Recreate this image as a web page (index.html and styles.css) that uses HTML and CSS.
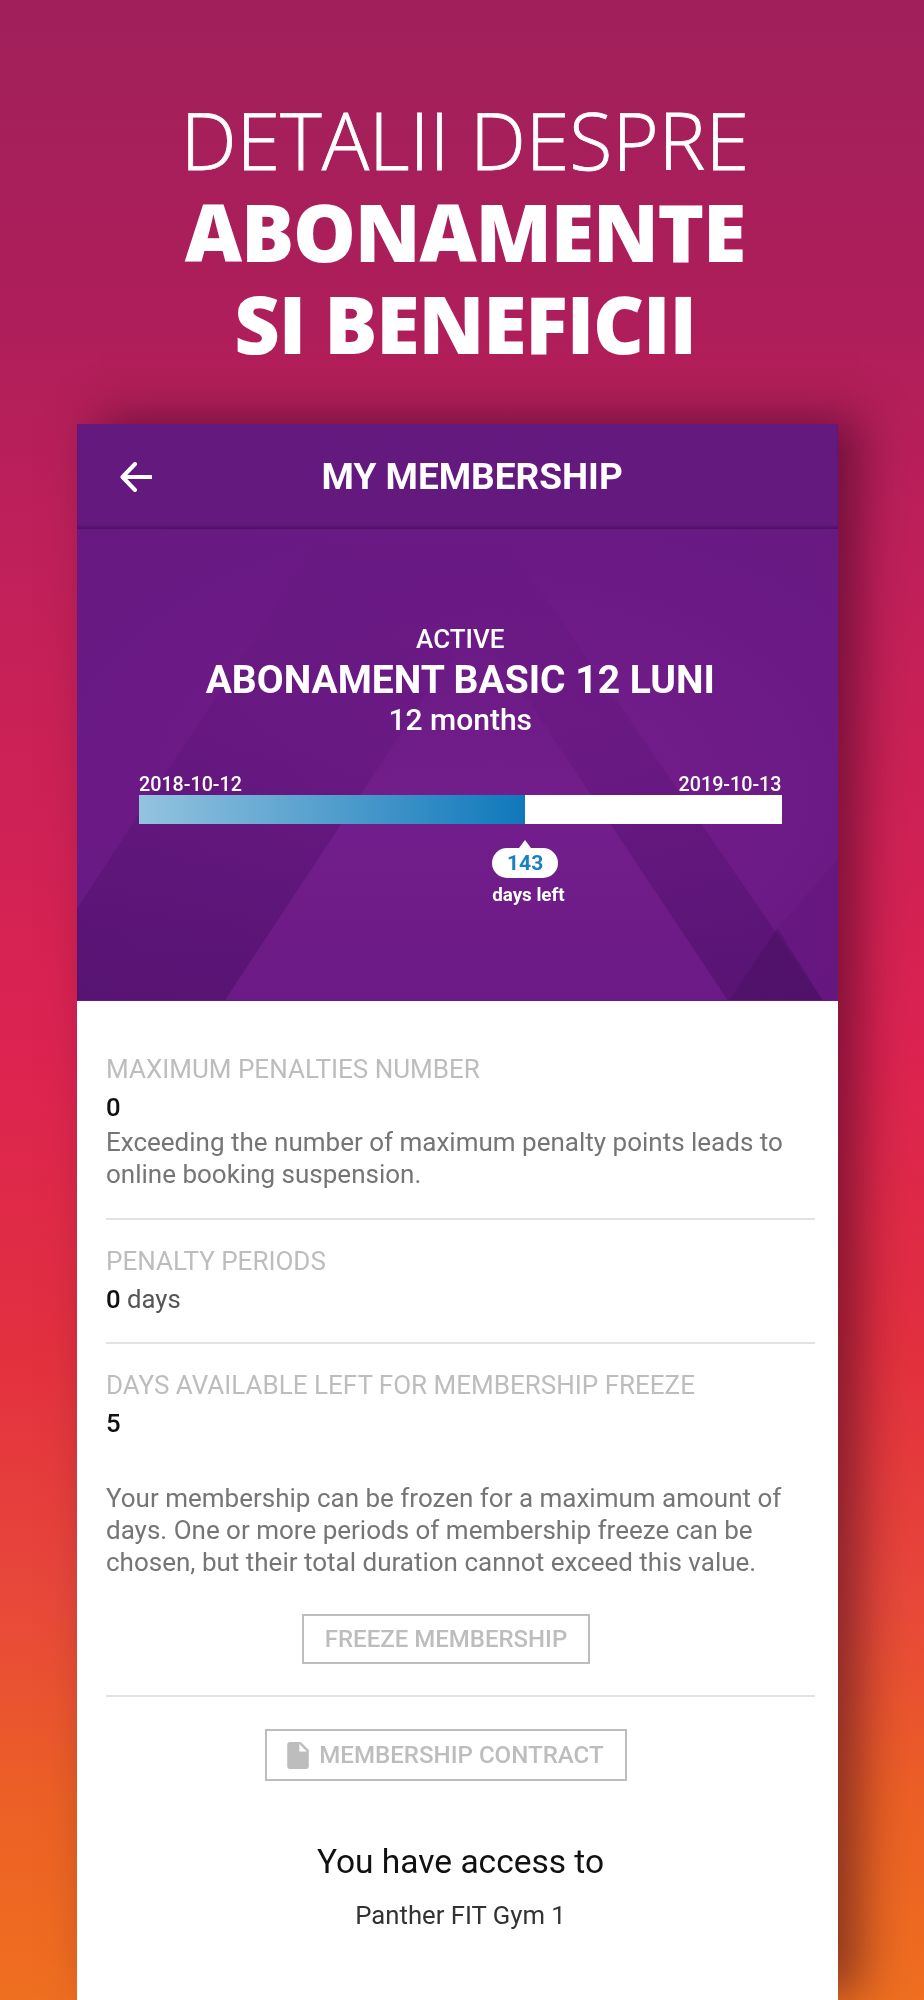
FILE: index.html
```html
<!DOCTYPE html>
<html lang="en">
<head>
<meta charset="utf-8">
<title>My Membership</title>
<link rel="stylesheet" href="styles.css">
</head>
<body>
<h1 class="headline">
  <span class="headline-light">DETALII DESPRE</span>
  <span class="headline-bold">ABONAMENTE</span>
  <span class="headline-bold">SI BENEFICII</span>
</h1>
<main class="card">
  <header class="topbar">
    <svg class="back" viewBox="0 0 32 30" aria-hidden="true"><path d="M31 15H3M15 2 2.5 15 15 28" /></svg>
    <div class="topbar-title">MY MEMBERSHIP</div>
  </header>
  <section class="hero">
    <svg class="hero-art" viewBox="0 0 761 473" preserveAspectRatio="none" aria-hidden="true">
      <defs>
        <linearGradient id="band" x1="0" y1="0" x2="0" y2="1">
          <stop offset="0.2" stop-color="#4a0f66" stop-opacity="0"/>
          <stop offset="0.55" stop-color="#4a0f66" stop-opacity="0.18"/>
          <stop offset="1" stop-color="#4a0f66" stop-opacity="0.55"/>
        </linearGradient>
        <linearGradient id="inner" x1="0" y1="0" x2="0" y2="1">
          <stop offset="0" stop-color="#721e8c" stop-opacity="0"/>
          <stop offset="0.5" stop-color="#721e8c"/>
          <stop offset="1" stop-color="#6c1a86"/>
        </linearGradient>
      </defs>
      <polygon points="333,-129 -60,472 745,472" fill="url(#band)"/>
      <polygon points="398,92 148,472 650,472" fill="url(#inner)"/>
      <polygon points="700,400 652,472 745,472" fill="#4b1066" opacity="0.6"/>
      <polygon points="761,330 700,400 745,472 761,472" fill="#4b1066" opacity="0.12"/>
    </svg>
    <div class="hero-content">
      <div class="status">ACTIVE</div>
      <div class="plan">ABONAMENT BASIC 12 LUNI</div>
      <div class="duration">12 months</div>
      <div class="dates"><span>2018-10-12</span><span>2019-10-13</span></div>
      <div class="bar"><div class="bar-fill" style="width:60.1%"></div></div>
      <div class="marker" style="margin-left:calc(60.1% - 33px)">
        <div class="bubble">143</div>
        <div class="marker-label">days left</div>
      </div>
    </div>
  </section>
  <section class="details">
    <div class="block block-first">
      <div class="label">MAXIMUM PENALTIES NUMBER</div>
      <div class="value">0</div>
      <p class="desc">Exceeding the number of maximum penalty points leads to online booking suspension.</p>
    </div>
    <div class="block block-mid">
      <div class="label">PENALTY PERIODS</div>
      <div class="value">0 <span class="value-unit">days</span></div>
    </div>
    <div class="block block-freeze">
      <div class="label">DAYS AVAILABLE LEFT FOR MEMBERSHIP FREEZE</div>
      <div class="value">5</div>
      <p class="desc desc-freeze">Your membership can be frozen for a maximum amount of days. One or more periods of membership freeze can be chosen, but their total duration cannot exceed this value.</p>
      <div class="btn-row"><div class="btn">FREEZE MEMBERSHIP</div></div>
    </div>
    <div class="btn-row btn-row-contract">
      <div class="btn btn-icon">
        <svg class="doc" viewBox="4 2 16 20" aria-hidden="true"><path d="M6 2c-1.1 0-2 .9-2 2v16c0 1.1.9 2 2 2h12c1.1 0 2-.9 2-2V8l-6-6H6zm7 7V3.5L18.5 9H13z"/></svg>
        MEMBERSHIP CONTRACT
      </div>
    </div>
    <h2 class="access-title">You have access to</h2>
    <div class="access-item">Panther FIT Gym 1</div>
  </section>
</main>
</body>
</html>
```

FILE: styles.css
```css
html, body { margin: 0; padding: 0; }
body {
  width: 924px;
  height: 2000px;
  overflow: hidden;
  background: linear-gradient(180deg, #a0205b 0, #ad1e5a 300px, #c0205a 560px, #dc2351 1050px, #e3303f 1350px, #e8483a 1600px, #ec6025 1800px, #ef6f20 2000px);
  font-family: Roboto, "Liberation Sans", sans-serif;
}
.headline {
  margin: 0;
  padding: 94px 0 0 6px;
  height: 424px;
  box-sizing: border-box;
  text-align: center;
  color: #fff;
  font-family: "Open Sans", sans-serif;
  font-size: 79px;
  line-height: 92px;
  font-weight: 400;
}
.headline span { display: block; }
.headline-light { font-weight: 300; -webkit-text-stroke: 0.8px #fff; }
.headline-bold { font-weight: 800; letter-spacing: -1.2px; }

.card {
  margin-left: 76.5px;
  width: 761.5px;
  height: 1576px;
  background: #fff;
  box-shadow: 22px -6px 44px rgba(40, 0, 30, 0.5);
}
.topbar {
  display: flex;
  align-items: center;
  gap: 170px;
  height: 105px;
  box-sizing: border-box;
  padding: 0 0 0 43px;
  background: #64197f;
  box-shadow: inset 0 -3px 3px -1px rgba(60, 10, 80, 0.6);
}
.back { width: 32px; height: 30px; flex: none; }
.back path { fill: none; stroke: #fff; stroke-width: 4; stroke-linecap: round; stroke-linejoin: round; }
.topbar-title {
  color: #fff;
  font-size: 37px;
  font-weight: 700;
  white-space: nowrap;
  filter: blur(0.5px);
}
.hero {
  position: relative;
  height: 472px;
  background: radial-gradient(ellipse at 55% 55%, #751d8d 0, #6b1a85 60%, #671981 100%);
  overflow: hidden;
}
.hero-art { position: absolute; inset: 0; width: 100%; height: 100%; }
.hero-content {
  position: relative;
  box-sizing: border-box;
  height: 100%;
  padding: 95px 56.5px 0 62.5px;
  color: #fff;
  text-align: center;
  filter: blur(0.5px);
}
.status { font-size: 26px; line-height: 30px; font-weight: 500; }
.plan { font-size: 39px; line-height: 40px; font-weight: 700; margin-top: 6px; white-space: nowrap; }
.duration { font-size: 30px; line-height: 32px; font-weight: 500; margin-top: 4px; }
.dates {
  display: flex;
  justify-content: space-between;
  margin-top: 38px;
  font-size: 19.7px;
  line-height: 21px;
  font-weight: 500;
}
.bar { height: 29px; background: #fff; }
.bar-fill { height: 100%; background: linear-gradient(90deg, #94c3df, #0f78bb); }
.marker { width: 72px; margin-top: 24px; text-align: left; }
.bubble {
  position: relative;
  width: 66px;
  height: 30px;
  border-radius: 15px;
  background: #fff;
  color: #1a80bf;
  font-size: 21px;
  font-weight: 700;
  line-height: 31px;
  text-align: center;
}
.bubble::before {
  content: "";
  position: absolute;
  left: 24px;
  top: -8px;
  border-left: 9px solid transparent;
  border-right: 9px solid transparent;
  border-bottom: 12px solid #fff;
}
.marker-label { font-size: 18.8px; font-weight: 700; line-height: 22px; margin-top: 6px; white-space: nowrap; }

.details { padding: 0 23px 0 29.5px; filter: blur(0.5px); }
.block { border-bottom: 2px solid #e3e3e3; }
.block-first { padding-top: 53px; height: 219px; box-sizing: border-box; }
.block-mid { padding-top: 26px; height: 124px; box-sizing: border-box; }
.block-freeze { padding-top: 26px; height: 353px; box-sizing: border-box; }
.label { color: #bdbdbd; font-size: 26px; line-height: 30px; white-space: nowrap; }
.value { color: #111; font-size: 25.7px; line-height: 30px; font-weight: 500; margin-top: 8px; }
.value-unit { color: #555; font-weight: 400; }
.desc { margin: 4px 0 0; color: #757575; font-size: 26px; line-height: 32px; }
.desc-freeze { margin-top: 44px; }
.btn-row { display: flex; justify-content: center; padding-right: 29px; margin-top: 36px; }
.btn-row-contract { margin-top: 32px; }
.btn {
  display: flex;
  align-items: center;
  gap: 10px;
  height: 50px;
  box-sizing: border-box;
  padding: 0 21px;
  border: 2px solid #bdbdbd;
  color: #bdbdbd;
  font-size: 24px;
  font-weight: 500;
  white-space: nowrap;
}
.btn-icon { height: 52px; padding-left: 20px; font-size: 24.1px; }
.doc { width: 22px; height: 27px; fill: #bdbdbd; flex: none; }
.access-title {
  margin: 61px 0 0;
  color: #111;
  font-size: 33.5px;
  line-height: 40px;
  font-weight: 400;
  text-align: center;
}
.access-item { margin-top: 18px; color: #333; font-size: 25.7px; line-height: 30px; text-align: center; }
```
